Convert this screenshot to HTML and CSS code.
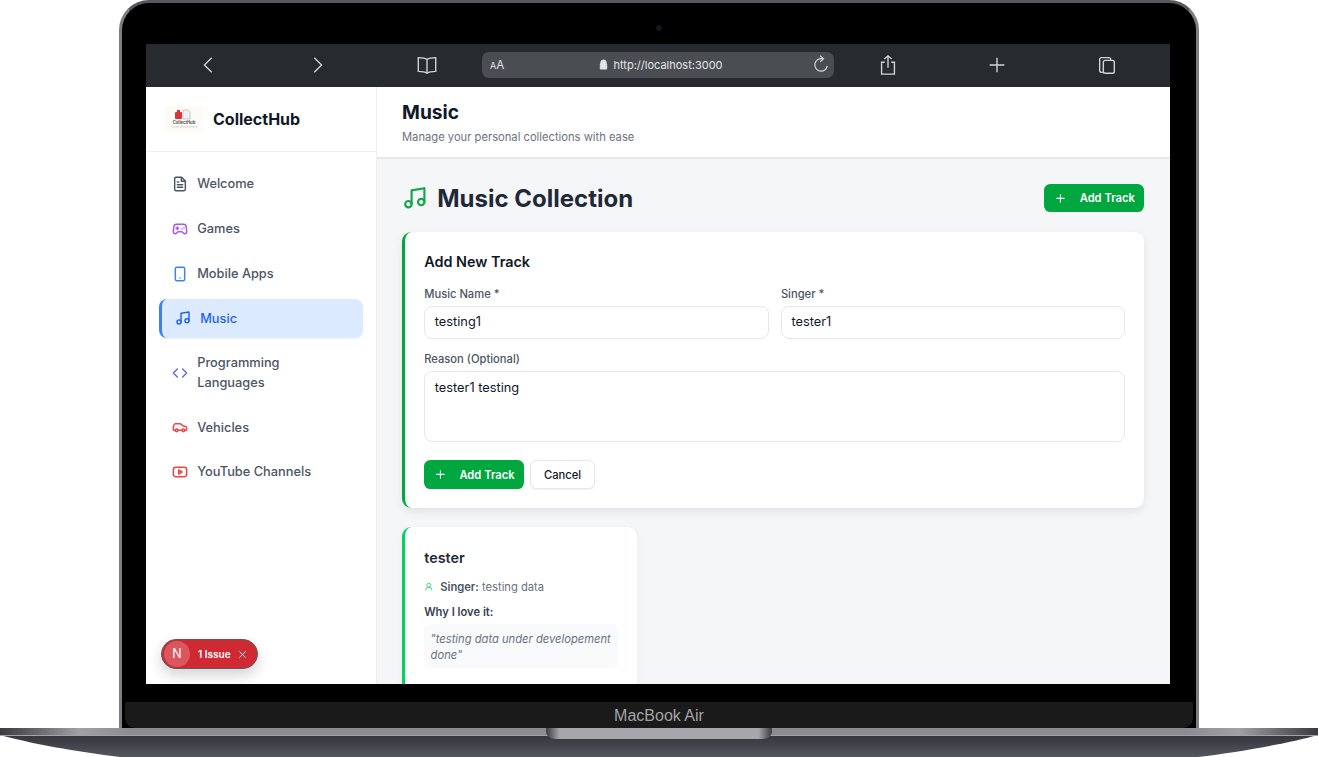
FILE: index.html
```html
<!DOCTYPE html>
<html lang="en">
<head>
    <meta charset="UTF-8">
    <title>CollectHub</title>
    <link rel="stylesheet" href="styles.css">
</head>
<body>

<div class="lid">
    <div class="camera"></div>
    <div class="screen">
        <div class="toolbar">
            <svg class="tb-icon tb-back" viewBox="0 0 24 24"><path d="M15 4l-8 8 8 8"/></svg>
            <svg class="tb-icon tb-next" viewBox="0 0 24 24"><path d="M9 4l8 8-8 8"/></svg>
            <svg class="tb-icon tb-book" viewBox="0 0 24 24"><path d="M12 6c-2-1.500-5-2-9.500-2v15c4.500 0 7.500.5 9.500 2 2-1.500 5-2 9.500-2V4C17 4 14 4.500 12 6zM12 6v15"/></svg>
            <div class="address">
                <span class="aa"><small>A</small>A</span>
                <span class="url">
                    <svg class="lock" viewBox="0 0 12 12"><path d="M3 5.500V4a3 3 0 0 1 6 0v1.500M2.500 5.500h7v5.500h-7z"/></svg>
                    http://localhost:3000
                </span>
                <svg class="tb-icon reload" viewBox="0 0 24 24"><path d="M19.500 13a7.500 7.500 0 1 1-6-8.500M11 1l4 3.500L11 8"/></svg>
            </div>
            <svg class="tb-icon tb-share" viewBox="0 0 24 24"><path d="M12 15V2M8 5.500L12 2l4 3.500M8.500 9H5v13h14V9h-3.500"/></svg>
            <svg class="tb-icon tb-plus" viewBox="0 0 24 24"><path d="M12 4v16M4 12h16"/></svg>
            <svg class="tb-icon tb-tabs" viewBox="0 0 24 24"><path d="M8 20H6a2 2 0 0 1-2-2V6a2 2 0 0 1 2-2h8a2 2 0 0 1 2 2v1M10 7h8a2 2 0 0 1 2 2v10a2 2 0 0 1-2 2h-8a2 2 0 0 1-2-2V9a2 2 0 0 1 2-2z"/></svg>
        </div>

        <div class="app">
            <aside class="sidebar">
                <div class="brand">
                    <svg class="logo" viewBox="0 0 38 26">
                        <rect width="38" height="26" fill="#fdfbf6"/>
                        <rect x="10" y="6" width="7" height="7" rx="1" fill="#d8343a"/>
                        <path d="M12 6V4h3v2" fill="#d8343a"/>
                        <path d="M18 4h5l2 2v7h-7z" fill="#f1f1f3" stroke="#9a9aa5" stroke-width=".5"/>
                        <text x="19" y="18" font-size="4.200" font-weight="600" text-anchor="middle" fill="#444">CollectHub</text>
                        <rect x="6" y="20.500" width="26" height=".8" fill="#c9c9cd"/>
                    </svg>
                    <span class="brand-name">CollectHub</span>
                </div>
                <nav class="nav">
                    <a class="nav-item">
                        <svg class="icon c-slate" viewBox="0 0 24 24"><path d="M14.500 2H6a2 2 0 0 0-2 2v16a2 2 0 0 0 2 2h12a2 2 0 0 0 2-2V7.500zM14 2v6h6M16 13H8M16 17H8M10 9H8"/></svg>
                        Welcome
                    </a>
                    <a class="nav-item">
                        <svg class="icon c-purple" viewBox="0 0 24 24"><path d="M6 11h4M8 9v4M15 12h.01M18 10h.01M17.320 5H6.680a4 4 0 0 0-3.978 3.590c-.006.052-.01.101-.017.152C2.604 9.416 2 14.456 2 16a3 3 0 0 0 3 3c1 0 1.500-.5 2-1l1.414-1.414A2 2 0 0 1 9.828 16h4.344a2 2 0 0 1 1.414.586L17 18c.5.5 1 1 2 1a3 3 0 0 0 3-3c0-1.545-.604-6.584-.685-7.258-.007-.05-.011-.1-.017-.151A4 4 0 0 0 17.320 5z"/></svg>
                        Games
                    </a>
                    <a class="nav-item">
                        <svg class="icon c-blue" viewBox="0 0 24 24"><rect x="5" y="2" width="14" height="20" rx="2"/><path d="M12 18h.01"/></svg>
                        Mobile Apps
                    </a>
                    <a class="nav-item active">
                        <svg class="icon c-blue" viewBox="0 0 24 24"><path d="M9 18V5l12-2v13"/><circle cx="6" cy="18" r="3"/><circle cx="18" cy="16" r="3"/></svg>
                        Music
                    </a>
                    <a class="nav-item nav-item-wrap">
                        <svg class="icon c-indigo" viewBox="0 0 24 24"><path d="M16 18l6-6-6-6M8 6l-6 6 6 6"/></svg>
                        <span>Programming<br>Languages</span>
                    </a>
                    <a class="nav-item">
                        <svg class="icon c-red" viewBox="0 0 24 24"><path d="M19 17h2c.6 0 1-.4 1-1v-3c0-.9-.7-1.700-1.500-1.900C18.700 10.600 16 10 16 10s-1.300-1.400-2.200-2.300c-.5-.4-1.100-.7-1.800-.7H5c-.6 0-1.100.4-1.400.9l-1.400 2.900A3.700 3.700 0 0 0 2 12v4c0 .6.4 1 1 1h2"/><circle cx="7" cy="17" r="2"/><path d="M9 17h6"/><circle cx="17" cy="17" r="2"/></svg>
                        Vehicles
                    </a>
                    <a class="nav-item">
                        <svg class="icon c-red" viewBox="0 0 24 24"><rect x="2" y="5" width="20" height="14" rx="3.500"/><path d="M10 9l5 3-5 3z"/></svg>
                        YouTube Channels
                    </a>
                </nav>
            </aside>

            <div class="main">
                <header class="page-header">
                    <h1>Music</h1>
                    <p>Manage your personal collections with ease</p>
                </header>
                <div class="content">
                    <div class="section-head">
                        <h2>
                            <svg class="title-icon" viewBox="0 0 24 24"><path d="M9 18V5l12-2v13"/><circle cx="6" cy="18" r="3"/><circle cx="18" cy="16" r="3"/></svg>
                            Music Collection
                        </h2>
                        <button class="btn btn-green" type="button">
                            <svg class="plus" viewBox="0 0 24 24"><path d="M5 12h14M12 5v14"/></svg>
                            Add Track
                        </button>
                    </div>

                    <form class="card form-card">
                        <h3>Add New Track</h3>
                        <div class="form-row">
                            <div class="field">
                                <label>Music Name *</label>
                                <div class="input">testing1</div>
                            </div>
                            <div class="field">
                                <label>Singer *</label>
                                <div class="input">tester1</div>
                            </div>
                        </div>
                        <div class="field">
                            <label>Reason (Optional)</label>
                            <div class="input textarea">tester1 testing</div>
                        </div>
                        <div class="form-actions">
                            <button class="btn btn-green" type="button">
                                <svg class="plus" viewBox="0 0 24 24"><path d="M5 12h14M12 5v14"/></svg>
                                Add Track
                            </button>
                            <button class="btn btn-white" type="button">Cancel</button>
                        </div>
                    </form>

                    <div class="card track-card">
                        <h4>tester</h4>
                        <div class="singer">
                            <svg class="singer-icon" viewBox="0 0 24 24"><circle cx="12" cy="8" r="5"/><path d="M20 21a8 8 0 0 0-16 0"/></svg>
                            <span><b>Singer:</b> testing data</span>
                        </div>
                        <div class="why">Why I love it:</div>
                        <div class="quote">"testing data under developement done"</div>
                    </div>
                </div>
            </div>
        </div>

        <div class="issue-badge">
            <span class="issue-n">N</span>
            <span class="issue-text">1 Issue</span>
            <svg class="issue-x" viewBox="0 0 24 24"><path d="M5 5l14 14M19 5L5 19"/></svg>
        </div>
    </div>
    <div class="bezel">MacBook Air</div>
</div>

<svg class="base" viewBox="0 0 1318 29" preserveAspectRatio="none">
    <defs>
        <linearGradient id="baseBody" x1="0" y1="0" x2="0" y2="1">
            <stop offset="0" stop-color="#2f3036"/>
            <stop offset=".5" stop-color="#3f4047"/>
            <stop offset="1" stop-color="#55575f"/>
        </linearGradient>
        <linearGradient id="baseTop" x1="0" y1="0" x2="1" y2="0">
            <stop offset="0" stop-color="#3a3b40"/>
            <stop offset=".03" stop-color="#6a6b70"/>
            <stop offset=".06" stop-color="#a0a1a6"/>
            <stop offset=".1" stop-color="#8c8d92"/>
            <stop offset=".9" stop-color="#8c8d92"/>
            <stop offset=".94" stop-color="#a0a1a6"/>
            <stop offset=".97" stop-color="#6a6b70"/>
            <stop offset="1" stop-color="#3a3b40"/>
        </linearGradient>
        <linearGradient id="notch" x1="0" y1="0" x2="1" y2="0">
            <stop offset="0" stop-color="#3a3b40"/>
            <stop offset=".06" stop-color="#a6a7ad"/>
            <stop offset=".94" stop-color="#a6a7ad"/>
            <stop offset="1" stop-color="#3a3b40"/>
        </linearGradient>
    </defs>
    <path d="M0 0H1318V7C1290 15 1240 24 1198 29H120C78 24 28 15 0 7z" fill="url(#baseBody)"/>
    <rect width="1318" height="7" fill="url(#baseTop)"/>
    <rect y="7" width="1318" height="1" fill="#a2a3a8"/>
    <path d="M546 0H772V3C772 8 768 11 762 11H556C550 11 546 8 546 3z" fill="url(#notch)"/>
</svg>

</body>
</html>
```

FILE: styles.css
```css
* {
    box-sizing: border-box;
}
html, body {
    margin: 0;
    height: 100%;
    overflow: hidden;
    background: #fff;
}
body {
    font-family: Inter, "Liberation Sans", sans-serif;
    font-size: 11.2px;
    color: #111827;
}

/* laptop frame */
.lid {
    position: relative;
    width: 1080px;
    height: 728px;
    margin-left: 119px;
    padding: 41px 24px 0;
    background: #000;
    border: 3px solid #7d7d82;
    border-top-color: #58585c;
    border-bottom: none;
    border-radius: 30px 30px 0 0;
}
.camera {
    position: absolute;
    top: 22px;
    left: 534px;
    width: 6px;
    height: 6px;
    border-radius: 50%;
    background: #14161c;
}
.screen {
    position: relative;
    width: 1026px;
    height: 640px;
    padding-right: 2px;
    overflow: hidden;
    display: flex;
    flex-direction: column;
}
.bezel {
    margin: 18px -21px 0;
    height: 26px;
    background: #1a1a1a;
    border-radius: 0 0 10px 10px;
    color: #a3a3a6;
    font-family: "Liberation Sans", sans-serif;
    font-size: 16px;
    line-height: 27px;
    text-align: center;
}
.base {
    display: block;
    width: 1318px;
    height: 29px;
}

/* browser bar */
.toolbar {
    flex: none;
    height: 43px;
    width: 1024px;
    background: #272b2f;
    display: flex;
    align-items: center;
    padding: 0 0 2px 52px;
}
.tb-icon {
    flex: none;
    width: 22px;
    height: 22px;
    fill: none;
    stroke: #d2d3d5;
    stroke-width: 1.500;
}
.tb-next {
    margin-left: 86px;
}
.tb-book {
    margin-left: 88px;
}
.address {
    flex: none;
    width: 352px;
    height: 26px;
    margin-left: 44px;
    padding: 0 3px 0 8px;
    background: #4a4e53;
    border-radius: 7px;
    display: flex;
    align-items: center;
    color: #e4e5e6;
    font-size: 11px;
}
.aa {
    width: 20px;
    font-size: 11.500px;
}
.aa small {
    font-size: 9px;
}
.url {
    flex: 1;
    display: flex;
    align-items: center;
    justify-content: center;
    gap: 4px;
}
.lock {
    width: 11px;
    height: 11px;
    fill: #e4e5e6;
    stroke: #e4e5e6;
}
.reload {
    width: 20px;
    height: 20px;
}
.tb-share {
    margin-left: 43px;
}
.tb-plus {
    margin-left: 87px;
}
.tb-tabs {
    margin-left: 88px;
}

/* app */
.app {
    flex: 1;
    width: 1024px;
    min-height: 0;
    display: flex;
    background: #f5f6f8;
}
.sidebar {
    flex: none;
    width: 231px;
    background: #fff;
    border-right: 1px solid #eceef1;
}
.brand {
    height: 65px;
    padding-left: 19px;
    display: flex;
    align-items: center;
    gap: 10px;
    border-bottom: 1px solid #eceef1;
}
.logo {
    width: 38px;
    height: 26px;
}
.brand-name {
    font-size: 16px;
    font-weight: 700;
    color: #111827;
}
.nav {
    padding: 12.800px;
    display: flex;
    flex-direction: column;
    gap: 6.400px;
}
.nav-item {
    display: flex;
    align-items: center;
    gap: 9.600px;
    padding: 9.600px 12.800px;
    font-size: 12.800px;
    line-height: 19.200px;
    font-weight: 500;
    color: #4b5563;
    border-radius: 8px;
}
.nav-item-wrap {
    padding-top: 9px;
    padding-bottom: 9px;
    line-height: 19.800px;
}
.nav-item.active {
    color: #2563eb;
    background: #dbeafe;
    border-left: 3.200px solid #3b82f6;
    box-shadow: 0 1px 2px rgba(0, 0, 0, 0.06);
}
.icon {
    flex: none;
    width: 16px;
    height: 16px;
    fill: none;
    stroke-width: 2.200;
    stroke-linecap: round;
    stroke-linejoin: round;
}
.c-slate { stroke: #4b5563; }
.c-purple { stroke: #a855f7; }
.c-blue { stroke: #3b82f6; }
.c-indigo { stroke: #6366f1; }
.c-red { stroke: #ef4444; }
.active .c-blue { stroke: #2563eb; }

.main {
    flex: 1;
    min-width: 0;
    display: flex;
    flex-direction: column;
}
.page-header {
    flex: none;
    height: 72px;
    padding: 11.200px 25px 0;
    background: #fff;
    border-bottom: 2px solid #e5e7eb;
}
.page-header h1 {
    margin: 0;
    font-size: 19.200px;
    line-height: 28.800px;
    font-weight: 700;
    color: #111827;
}
.page-header p {
    margin: 1.800px 0 0;
    font-size: 11.200px;
    line-height: 16px;
    color: #6b7280;
}
.content {
    flex: 1;
    min-height: 0;
    overflow: hidden;
    padding: 24.600px 25.600px 0 25px;
}
.section-head {
    display: flex;
    align-items: center;
    justify-content: space-between;
    height: 28.800px;
    margin-bottom: 19.200px;
}
.section-head h2 {
    margin: 0;
    display: flex;
    align-items: center;
    gap: 9.600px;
    font-size: 24px;
    font-weight: 700;
    color: #1f2937;
}
.title-icon {
    width: 25.600px;
    height: 25.600px;
    fill: none;
    stroke: #16a34a;
    stroke-width: 2;
    stroke-linecap: round;
    stroke-linejoin: round;
}
.btn {
    font: inherit;
    font-size: 11.200px;
    font-weight: 600;
    height: 28.800px;
    border-radius: 6.400px;
    display: inline-flex;
    align-items: center;
    cursor: pointer;
}
.btn-green {
    gap: 12.800px;
    padding: 0 9.600px;
    color: #fff;
    background: #00a63e;
    border: none;
}
.btn-white {
    padding: 0 13.300px;
    color: #111827;
    background: #fff;
    border: 1px solid #e5e7eb;
    box-shadow: 0 1px 2px rgba(0, 0, 0, 0.05);
    font-weight: 500;
}
.plus {
    width: 12.800px;
    height: 12.800px;
    fill: none;
    stroke: #fff;
    stroke-width: 2;
    stroke-linecap: round;
}
.card {
    background: #fff;
    border-radius: 9.600px;
    padding: 19.200px;
}
.form-card {
    padding-bottom: 18.800px;
    border-left: 3.200px solid #00a63e;
    box-shadow: 0 4px 10px rgba(0, 0, 0, 0.08);
    margin-bottom: 19.200px;
}
.form-card h3 {
    margin: 0 0 13.800px;
    font-size: 14.400px;
    line-height: 21.600px;
    font-weight: 600;
    color: #111827;
}
.form-row {
    display: grid;
    grid-template-columns: 1fr 1fr;
    gap: 12.400px;
}
.field {
    margin-bottom: 11.800px;
}
.field label {
    display: block;
    margin-bottom: 3.200px;
    font-size: 11.200px;
    line-height: 16.800px;
    font-weight: 500;
    color: #4b5563;
}
.input {
    height: 33px;
    padding: 0 9.600px;
    border: 1px solid #e5e7eb;
    border-radius: 8px;
    font-size: 12.800px;
    line-height: 30px;
    color: #111827;
    background: #fff;
}
.textarea {
    height: 71px;
    line-height: 31px;
}
.form-actions {
    display: flex;
    gap: 5.600px;
    margin-top: 18.400px;
}
.track-card {
    width: 235px;
    height: 180px;
    padding-top: 20.200px;
    border-left: 3.200px solid #00d35f;
    box-shadow: 0 2px 6px rgba(0, 0, 0, 0.05);
}
.track-card h4 {
    margin: 0;
    font-size: 14.400px;
    line-height: 21.600px;
    font-weight: 600;
    color: #1f2937;
}
.singer {
    display: flex;
    align-items: center;
    gap: 6.400px;
    margin-top: 10.600px;
    line-height: 16.800px;
    color: #6b7280;
}
.singer b {
    font-weight: 600;
    color: #4b5563;
}
.singer-icon {
    width: 9.600px;
    height: 9.600px;
    margin-top: -2px;
    fill: none;
    stroke: #22c55e;
    stroke-width: 2;
}
.why {
    margin-top: 7.600px;
    line-height: 16.800px;
    font-weight: 600;
    color: #374151;
}
.quote {
    margin-top: 3px;
    width: 194px;
    padding: 7px 6.400px 5.800px;
    line-height: 16px;
    font-style: italic;
    color: #6b7280;
    background: #f9fafb;
    border-radius: 4.800px;
}

/* dev overlay */
.issue-badge {
    position: absolute;
    left: 15px;
    bottom: 15px;
    width: 97px;
    height: 30px;
    padding: 2px 9.500px 2px 2px;
    display: flex;
    align-items: center;
    background: #cf2a33;
    border: 1px solid #5b5b62;
    border-radius: 15px;
    box-shadow: 0 6px 14px rgba(0, 0, 0, 0.18);
    color: #fff;
}
.issue-n {
    flex: none;
    width: 26px;
    height: 26px;
    border-radius: 50%;
    background: #dc565d;
    font-size: 12.500px;
    line-height: 26px;
    text-align: center;
}
.issue-text {
    margin-left: 8px;
    font-size: 10px;
    font-weight: 600;
    white-space: nowrap;
}
.issue-x {
    width: 11px;
    height: 11px;
    margin-left: auto;
    fill: none;
    stroke: #fff;
    stroke-width: 1.800;
}
```
